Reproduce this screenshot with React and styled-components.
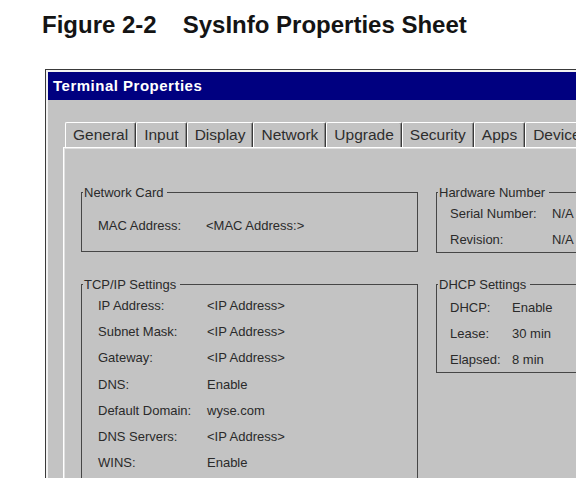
import React from 'react';
import styled, { createGlobalStyle } from 'styled-components';

const GlobalStyle = createGlobalStyle`
  html, body {
    margin: 0;
    padding: 0;
    background: #fff;
  }
  body {
    width: 576px;
    height: 478px;
    overflow: hidden;
    font-family: "Liberation Sans", Arial, sans-serif;
  }
`;

const Page = styled.div`
  padding: 11px 0 0 42px;
`;

const Caption = styled.h2`
  margin: 0;
  font: bold 24px/27px "Liberation Sans", Arial, sans-serif;
  color: #141414;
  white-space: nowrap;
`;

const CaptionTitle = styled.span`
  margin-left: 26px;
`;

const Window = styled.div`
  margin: 31px 0 0 3px;
  width: 640px;
  border: 1px solid #3a3a3a;
  padding: 2px;
  background: #f2f2f2;
`;

const TitleBar = styled.div`
  height: 28px;
  padding-left: 5px;
  background: #000080;
  color: #fff;
  font: bold 15px/28px "Liberation Sans", Arial, sans-serif;
  letter-spacing: 0.5px;
  white-space: nowrap;
`;

const Body = styled.div`
  background: #c3c3c3;
  padding: 22px 0 0 15px;
  height: 400px;
`;

const TabStrip = styled.div`
  display: flex;
  padding-left: 2px;
  height: 25px;
`;

const Tab = styled.div`
  padding: 0 7px;
  font-size: 15.5px;
  line-height: 24px;
  color: #2e2e2e;
  border-top: 1px solid #fff;
  border-left: 1px solid #fff;
  border-right: 1px solid #3a3a3a;
  border-radius: 2px 2px 0 0;
  box-shadow: inset -1px 0 #8a8a8a;
  white-space: nowrap;
`;

const Panel = styled.div`
  display: flex;
  gap: 18px;
  height: 100%;
  padding: 37px 0 0 17px;
  border-top: 1px solid #fff;
  border-left: 1px solid #fff;
  box-shadow: inset 1px 1px #e0e0e0;
`;

const Column = styled.div`
  display: flex;
  flex-direction: column;
  width: ${(p) => p.width}px;
  flex-shrink: 0;
`;

const Group = styled.fieldset`
  margin: ${(p) => p.gapTop || 0}px 0 0 0;
  padding: ${(p) => p.padTop || 0}px 0 ${(p) => p.padBottom || 0}px 0;
  border: 1px solid #464646;
  min-width: 0;
`;

const Legend = styled.legend`
  margin-left: 1px;
  padding: 0 4px 0 1px;
  font-size: 13px;
  line-height: 15px;
  color: #2a2a2a;
`;

const Row = styled.div`
  display: flex;
  align-items: center;
  height: ${(p) => p.height || 26}px;
  padding-left: ${(p) => p.indent}px;
  font-size: 13px;
  color: #2a2a2a;
  white-space: nowrap;
`;

const Label = styled.span`
  width: ${(p) => p.width}px;
  flex-shrink: 0;
`;

const tabs = ['General', 'Input', 'Display', 'Network', 'Upgrade', 'Security', 'Apps', 'Device'];

const tcpip = [
  ['IP Address:', '<IP Address>'],
  ['Subnet Mask:', '<IP Address>'],
  ['Gateway:', '<IP Address>'],
  ['DNS:', 'Enable'],
  ['Default Domain:', 'wyse.com'],
  ['DNS Servers:', '<IP Address>'],
  ['WINS:', 'Enable'],
];

const hardware = [
  ['Serial Number:', 'N/A'],
  ['Revision:', 'N/A'],
];

const dhcp = [
  ['DHCP:', 'Enable'],
  ['Lease:', '30 min'],
  ['Elapsed:', '8 min'],
];

const InfoRows = ({ rows, indent, labelWidth, height }) =>
  rows.map(([label, value]) => (
    <Row key={label} indent={indent} height={height}>
      <Label width={labelWidth}>{label}</Label>
      <span>{value}</span>
    </Row>
  ));

const App = () => (
  <>
    <GlobalStyle />
    <Page>
      <Caption>
        Figure 2-2<CaptionTitle>SysInfo Properties Sheet</CaptionTitle>
      </Caption>
      <Window>
        <TitleBar>Terminal Properties</TitleBar>
        <Body>
          <TabStrip>
            {tabs.map((t) => (
              <Tab key={t}>{t}</Tab>
            ))}
          </TabStrip>
          <Panel>
            <Column width={337}>
              <Group padTop={12} padBottom={13}>
                <Legend>Network Card</Legend>
                <InfoRows rows={[['MAC Address:', '<MAC Address:>']]} indent={16} labelWidth={108} />
              </Group>
              <Group gapTop={25} padBottom={20}>
                <Legend>TCP/IP Settings</Legend>
                <InfoRows rows={tcpip} indent={16} labelWidth={109} height={26.3} />
              </Group>
            </Column>
            <Column width={200}>
              <Group>
                <Legend>Hardware Number</Legend>
                <InfoRows rows={hardware} indent={13} labelWidth={102} />
              </Group>
              <Group gapTop={24} padTop={2}>
                <Legend>DHCP Settings</Legend>
                <InfoRows rows={dhcp} indent={13} labelWidth={62} />
              </Group>
            </Column>
          </Panel>
        </Body>
      </Window>
    </Page>
  </>
);

export default App;
